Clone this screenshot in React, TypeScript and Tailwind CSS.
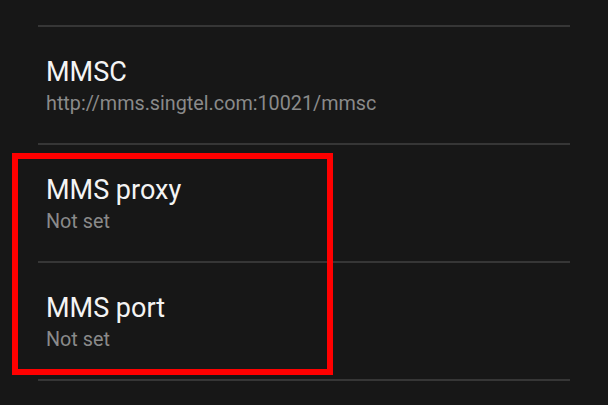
const rows = [
  { title: "MMSC", value: "http://mms.singtel.com:10021/mmsc" },
  { title: "MMS proxy", value: "Not set" },
  { title: "MMS port", value: "Not set" },
];

function Divider() {
  return <div className="mx-[38px] h-[2px] bg-[#363636]" />;
}

export default function App() {
  return (
    <div
      className="relative min-h-screen w-full overflow-hidden bg-[#171717] pt-[25px]"
      style={{ fontFamily: "Roboto, 'Noto Sans', sans-serif" }}
    >
      <Divider />
      {rows.map((row) => (
        <div key={row.title}>
          <div className="flex h-[116px] flex-col pl-[46px] pt-[29px]">
            <div className="text-[27px] leading-[32px] text-[#f4f4f4]">{row.title}</div>
            <div className="mt-[4px] text-[19.75px] leading-[24px] text-[#8a8a8a]">{row.value}</div>
          </div>
          <Divider />
        </div>
      ))}

      {/* highlight box */}
      <div className="absolute left-[12px] top-[153px] h-[222px] w-[321px] border-[6px] border-[#ff0000]" />
    </div>
  );
}
